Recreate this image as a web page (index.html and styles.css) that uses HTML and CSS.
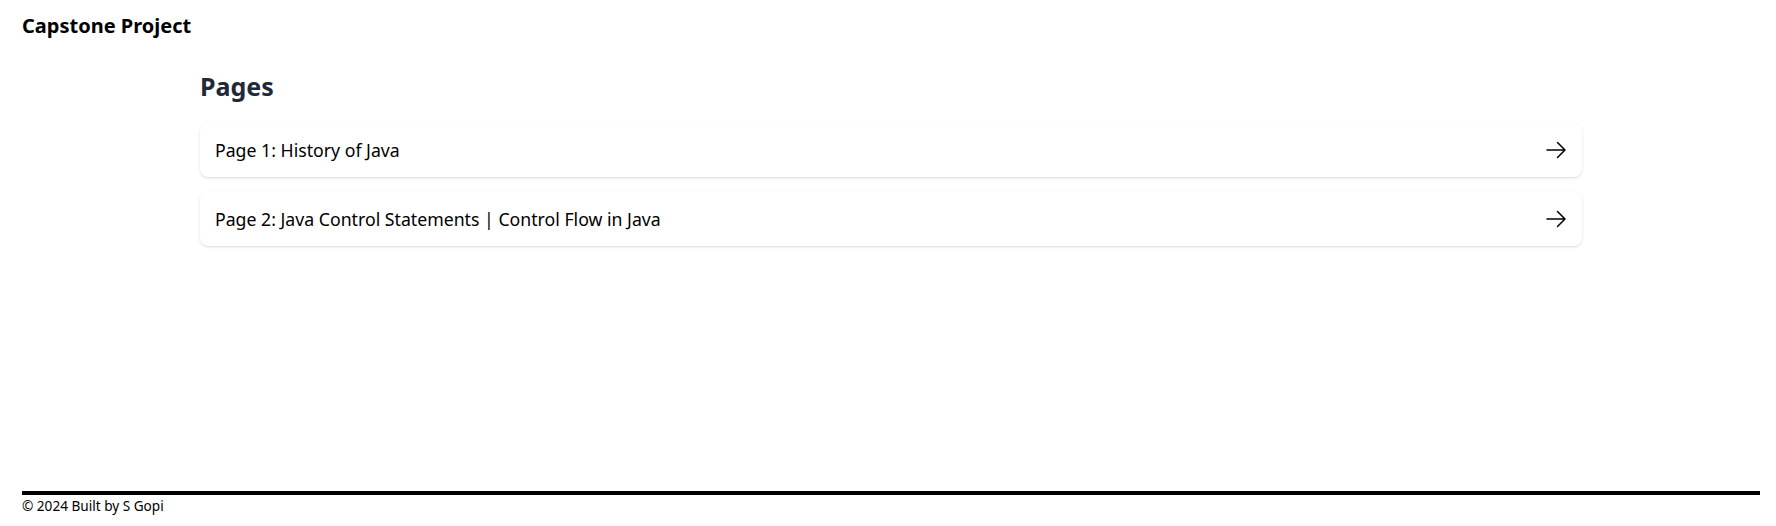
FILE: index.html
```html
<!DOCTYPE html>
<html lang="en">
<head>
<meta charset="utf-8">
<title>Capstone Project</title>
<link rel="stylesheet" href="styles.css">
</head>
<body>
<div class="page">
  <header class="site-header">
    <h1 class="brand">Capstone Project</h1>
  </header>
  <main class="main">
    <div class="container">
      <h2 class="title">Pages</h2>
      <ul class="page-list">
        <li>
          <a class="card" href="#">
            <span class="card-text">Page 1: History of Java</span>
            <svg class="arrow" viewBox="0 0 24 24" width="24" height="24" fill="none" stroke="currentColor" stroke-width="1.5" stroke-linecap="round" stroke-linejoin="round"><path d="M13.5 4.5 21 12m0 0-7.5 7.5M21 12H3"/></svg>
          </a>
        </li>
        <li>
          <a class="card" href="#">
            <span class="card-text">Page 2: Java Control Statements | Control Flow in Java</span>
            <svg class="arrow" viewBox="0 0 24 24" width="24" height="24" fill="none" stroke="currentColor" stroke-width="1.5" stroke-linecap="round" stroke-linejoin="round"><path d="M13.5 4.5 21 12m0 0-7.5 7.5M21 12H3"/></svg>
          </a>
        </li>
      </ul>
    </div>
  </main>
  <footer class="site-footer">
    <p class="copy">© 2024 Built by S Gopi</p>
  </footer>
</div>
</body>
</html>
```

FILE: styles.css
```css
* { box-sizing: border-box; }
html, body { margin: 0; padding: 0; background: #ffffff; }
body {
  font-family: "Noto Sans", Lato, sans-serif;
  color: #000;
}
.page {
  min-height: 100vh;
  display: flex;
  flex-direction: column;
  padding: 0 16px 0 22px;
}
.site-header {
  padding-top: 12px;
}
.brand {
  margin: 0;
  font-size: 20px;
  line-height: 28px;
  font-weight: 700;
  color: #000;
}
.main {
  flex: 1;
}
.container {
  max-width: 1382px;
  margin: 0 auto;
  padding-top: 30px;
}
.title {
  margin: 0 0 21px 0;
  font-size: 25px;
  line-height: 32px;
  font-weight: 700;
  color: #1f2937;
}
.page-list {
  list-style: none;
  margin: 0;
  padding: 0;
  display: flex;
  flex-direction: column;
  gap: 15px;
}
.card {
  display: flex;
  align-items: center;
  justify-content: space-between;
  height: 54px;
  padding: 0 14px 0 15px;
  background: #fff;
  border-radius: 8px;
  box-shadow: 0 1px 3px 0 rgba(0,0,0,0.12), 0 1px 2px -1px rgba(0,0,0,0.1);
  color: #000;
  text-decoration: none;
}
.card-text {
  font-size: 17.7px;
  line-height: 28px;
}
.arrow {
  display: block;
  color: #000;
}
.site-footer {
  border-top: 4px solid #000;
  height: 35px;
}
.copy {
  margin: 0;
  padding-top: 2px;
  font-size: 13.6px;
  line-height: 18px;
}
```
